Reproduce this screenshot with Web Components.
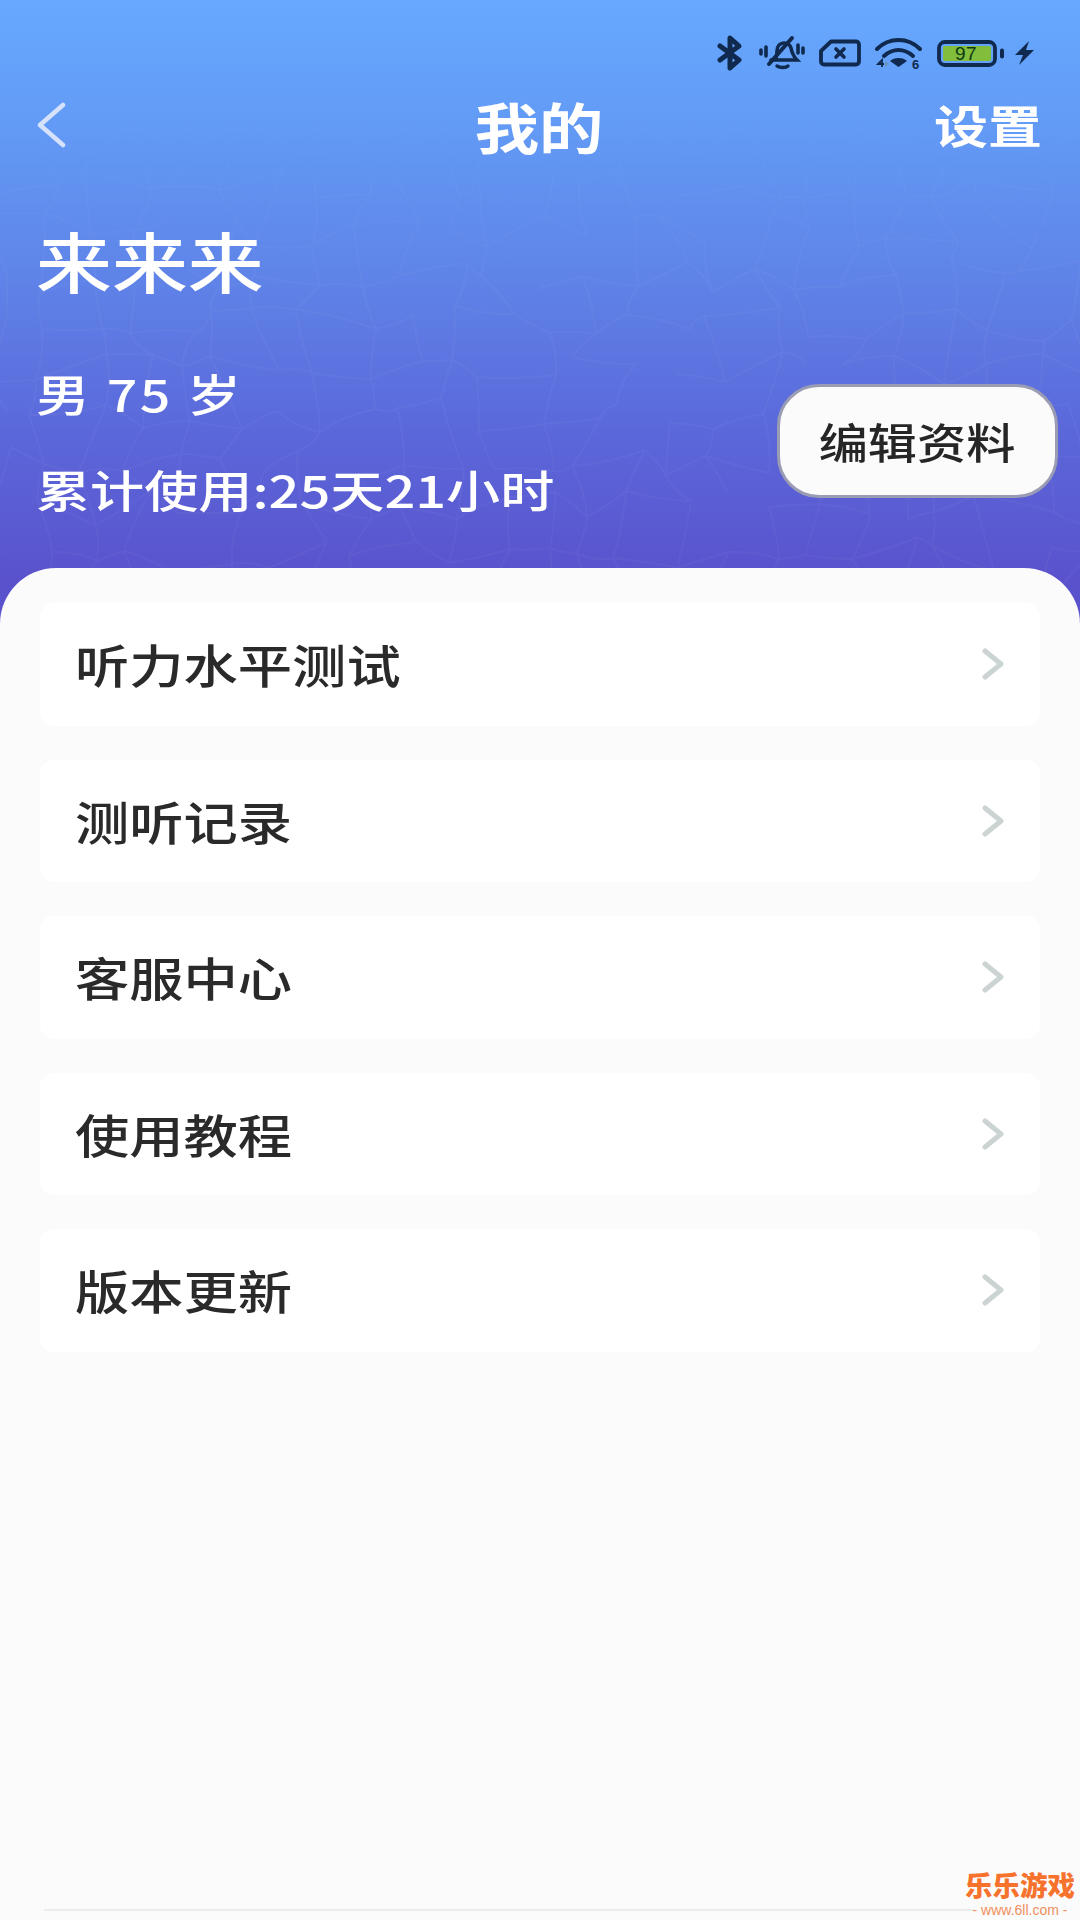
<!DOCTYPE html>
<html lang="zh-CN"><head><meta charset="utf-8"><title>我的</title>
<style>
html,body{margin:0;padding:0;background:#fbfbfb}
body{font-family:"Noto Sans CJK SC","Noto Sans",sans-serif}
</style></head>
<body>
<app-page>
  <status-bar slot="top"></status-bar>
  <nav-bar slot="top" title-text="我的" action="设置"></nav-bar>
  <user-profile slot="top" name="来来来" info="男 75 岁" usage="累计使用:25天21小时" button="编辑资料"></user-profile>
  <menu-card>听力水平测试</menu-card>
  <menu-card>测听记录</menu-card>
  <menu-card>客服中心</menu-card>
  <menu-card>使用教程</menu-card>
  <menu-card>版本更新</menu-card>
</app-page>
<script>
class AppPage extends HTMLElement{
  constructor(){super();
    const s=this.attachShadow({mode:'open'});
    let seed=11;const r=()=>(seed=(seed*16807)%2147483647)/2147483647;
    const cols=24,rows=13,pts=[];
    for(let j=0;j<=rows;j++){pts[j]=[];for(let i=0;i<=cols;i++){
      pts[j][i]=[i*1080/cols+(r()-.5)*38,j*600/rows+(r()-.5)*36];}}
    let d='';
    const seg=(p,q)=>{const mx=(p[0]+q[0])/2+(r()-.5)*12,my=(p[1]+q[1])/2+(r()-.5)*12;
      return `M${p[0].toFixed(0)} ${p[1].toFixed(0)}Q${mx.toFixed(0)} ${my.toFixed(0)} ${q[0].toFixed(0)} ${q[1].toFixed(0)}`;};
    for(let j=0;j<=rows;j++)for(let i=0;i<=cols;i++){
      const p=pts[j][i];
      if(i<cols&&r()>.2)d+=seg(p,pts[j][i+1]);
      if(j<rows&&r()>.2)d+=seg(p,pts[j+1][i]);
    }
    s.innerHTML=`<style>
      :host{display:flex;flex-direction:column;position:relative;width:1080px;height:1920px;overflow:hidden;
        background:linear-gradient(180deg,#67a9ff 0,#629af5 130px,#5f83e8 280px,#5b68da 430px,#5a52cc 580px,#5a52cc 640px) no-repeat;background-size:100% 640px;background-color:#fbfbfb}
      .tex{position:absolute;left:0;top:0;width:1080px;height:640px;pointer-events:none;
        -webkit-mask-image:linear-gradient(180deg,transparent 60px,#000 300px);mask-image:linear-gradient(180deg,transparent 60px,#000 300px)}
      header{position:relative;display:flex;flex-direction:column;height:568px;flex:none}
      main{position:relative;flex:1;display:flex;flex-direction:column;gap:34px;background:#fbfbfb;border-radius:56px 56px 0 0;padding:35px 40px 0}
      .rule{position:absolute;left:44px;bottom:9px;width:930px;height:2px;background:#ececec}
      .wm{position:absolute;right:5px;bottom:2px;display:flex;flex-direction:column;align-items:center;color:#f7722c}
      .wm b{font-size:27.5px;line-height:30px;font-weight:900;white-space:nowrap}
      .wm span{font:400 14px/16px "Liberation Sans",sans-serif;color:#ee9060;margin-top:3px;white-space:nowrap}
    </style>
    <svg class="tex" viewBox="0 0 1080 640" aria-hidden="true"><path d="${d}" fill="none" stroke="#fff" stroke-opacity=".035" stroke-width="2"/></svg>
    <header><slot name="top"></slot></header>
    <main><slot></slot><div class="rule"></div></main>
    <div class="wm"><b>乐乐游戏</b><span>- www.6ll.com -</span></div>`;
  }
}
class StatusBar extends HTMLElement{
  constructor(){super();
    this.attachShadow({mode:'open'}).innerHTML=`<style>
      :host{display:flex;justify-content:flex-end;align-items:center;height:34px;padding:36px 46px 6px 0;color:#10294f}
      svg{display:block;flex:none;overflow:visible}
      .batt{position:relative;display:flex}
      .batt span{position:absolute;left:5px;top:4px;width:48px;height:18px;font:400 19px/19px "Liberation Sans",sans-serif;color:#0b3a14;text-align:center;letter-spacing:.5px}
    </style>
    <svg width="28" height="34" viewBox="0 0 28 34" style="margin-right:14px"><path d="M3 10l19 14-9 8V2l9 8L3 24" fill="none" stroke="currentColor" stroke-width="5" stroke-linejoin="round" stroke-linecap="round"/></svg>
    <svg width="46" height="34" viewBox="0 0 46 34" style="margin-right:14px"><g fill="none" stroke="currentColor" stroke-linecap="round"><path d="M15 24c3-2 3-6 3-9 0-5 3-8 7-8s6 2 7 5c1 5 2 8 6 12H12" stroke-width="3.6"/><path d="M18 30c3 2 9 2 11 0" stroke-width="3.4"/><path d="M10 28L33 2" stroke-width="4"/><path d="M7 11v9M2 14v4M39 9v8M44 12v5" stroke-width="3.6"/></g></svg>
    <svg width="42" height="28" viewBox="0 0 42 28" style="margin-right:14px"><path d="M12 2.500h25a3 3 0 0 1 3 3v17a3 3 0 0 1-3 3H5a3 3 0 0 1-3-3V12z" fill="none" stroke="currentColor" stroke-width="3.800" stroke-linejoin="round"/><path d="M17 10l8 8M25 10l-8 8" stroke="currentColor" stroke-width="3.600" stroke-linecap="round"/></svg>
    <svg width="48" height="32" viewBox="0 0 48 32" style="margin-right:14px"><g fill="none" stroke="currentColor" stroke-linecap="round" stroke-width="4"><path d="M2 12C14 0 33 0 45 12"/><path d="M9 19c9-8 20-8 29 0"/></g><path d="M15 24c4-4 13-4 17 0l-8.500 6z" fill="currentColor"/><path d="M7 30v-7l-4 4h6" fill="none" stroke="currentColor" stroke-width="1.800"/><path d="M10 24l4 3-4 3z" fill="#6d93b8"/><text x="37" y="32" font-family="Liberation Sans" font-weight="700" font-size="13" fill="currentColor">6</text></svg>
    <div class="batt" style="margin-right:9px"><svg width="68" height="27" viewBox="0 0 68 27"><rect x="2" y="2" width="56" height="23" rx="6" fill="none" stroke="currentColor" stroke-width="3.800"/><rect x="6" y="6" width="48" height="15" rx="1.500" fill="#82bd3c"/><rect x="63" y="8.500" width="4" height="10" rx="2" fill="currentColor"/></svg><span>97</span></div>
    <svg width="20" height="24" viewBox="0 0 20 24"><path d="M15 0L1 14h8L5 24l15-15h-8z" fill="currentColor"/></svg>`;
  }
}
class NavBar extends HTMLElement{
  constructor(){super();
    this.attachShadow({mode:'open'}).innerHTML=`<style>
      :host{display:grid;grid-template-columns:1fr auto 1fr;align-items:center;height:98px;padding:0 38px 0 36px;color:#fff}
      svg{display:block}
      h1{margin:0;font-size:55px;line-height:98px;font-weight:700;transform:scaleX(1.17)}
      a{justify-self:end;font-size:45px;line-height:98px;font-weight:700;transform:scaleX(1.2);transform-origin:right center}
    </style>
    <svg width="30" height="46" viewBox="0 0 30 46"><path d="M27 3L4 23l23 20" fill="none" stroke="#d6e2fb" stroke-width="4.500" stroke-linecap="round" stroke-linejoin="round"/></svg>
    <h1>${this.getAttribute('title-text')}</h1><a>${this.getAttribute('action')}</a>`;
  }
}
class UserProfile extends HTMLElement{
  constructor(){super();
    const a=n=>this.getAttribute(n);
    this.attachShadow({mode:'open'}).innerHTML=`<style>
      :host{display:flex;justify-content:space-between;align-items:flex-start;padding:0 22px 0 36px;flex:1;color:#fff}
      .l{display:flex;flex-direction:column;align-items:flex-start}
      .l div{transform-origin:left center;white-space:pre}
      .name{font-size:66px;line-height:80px;font-weight:500;margin:45px 0 0;transform:scaleX(1.15)}
      .info{font-size:44px;line-height:60px;font-weight:500;letter-spacing:2px;margin-top:64px;transform:scaleX(1.22)}
      .use{font-size:44px;line-height:60px;font-weight:500;margin-top:36px;transform:scaleX(1.23)}
      button{display:block;flex:none;box-sizing:border-box;width:281px;height:114px;margin-top:210px;border-radius:42px;border:3px solid #9a9cb4;background:#fbfbfb;color:#262626;font:500 42px/1 "Noto Sans CJK SC",sans-serif;padding:0}
      button span{display:inline-block;transform:scaleX(1.17)}
    </style>
    <div class="l"><div class="name">${a('name')}</div><div class="info">${a('info')}</div><div class="use">${a('usage')}</div></div>
    <button><span>${a('button')}</span></button>`;
  }
}
class MenuCard extends HTMLElement{
  constructor(){super();
    this.attachShadow({mode:'open'}).innerHTML=`<style>
      :host{display:flex;align-items:center;justify-content:space-between;box-sizing:border-box;height:122.500px;background:#fff;border-radius:14px;padding:0 35px 0 35px;color:#2a2a2a;font-size:46px;font-weight:500}
      svg{display:block;flex:none}
      span{line-height:1;margin-top:-2px;transform:scaleX(1.18);transform-origin:left center;white-space:nowrap}
    </style>
    <span><slot></slot></span>
    <svg width="24" height="32" viewBox="0 0 24 32"><path d="M4 3l16 13L4 29" fill="none" stroke="#cbd4d2" stroke-width="5" stroke-linecap="round" stroke-linejoin="round"/></svg>`;
  }
}
customElements.define('app-page',AppPage);
customElements.define('status-bar',StatusBar);
customElements.define('nav-bar',NavBar);
customElements.define('user-profile',UserProfile);
customElements.define('menu-card',MenuCard);
</script>
</body></html>
